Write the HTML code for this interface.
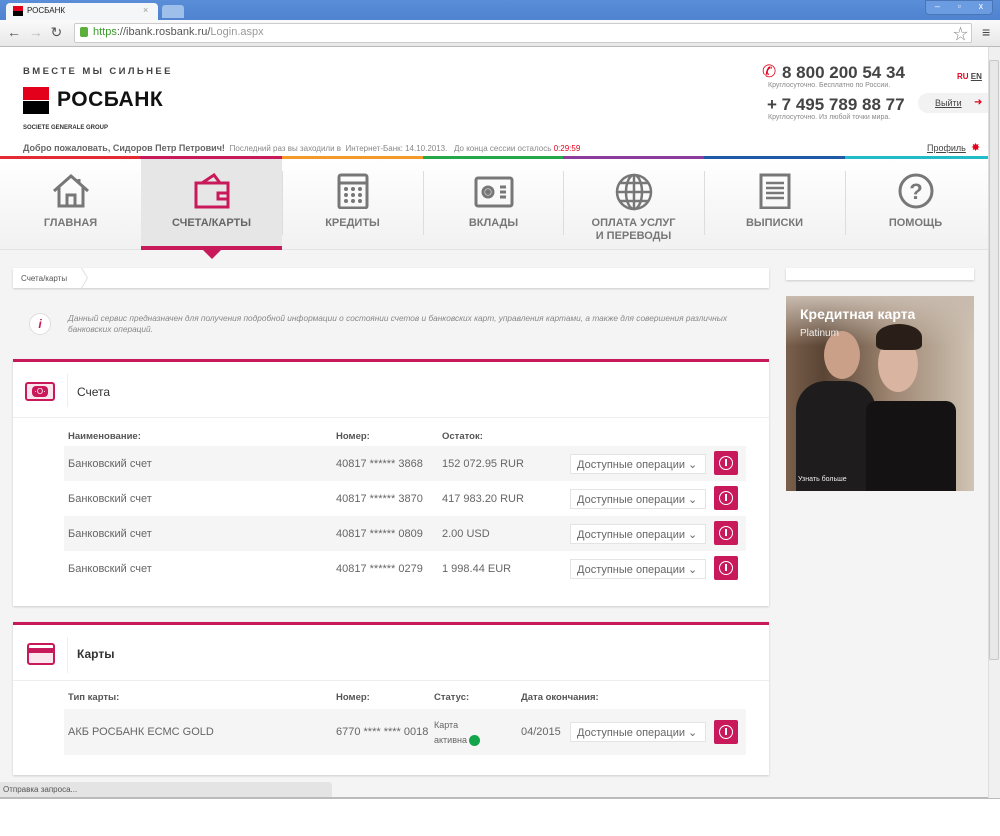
<!DOCTYPE html>
<html><head><meta charset="utf-8"><style>
*{margin:0;padding:0;box-sizing:border-box}
body{width:1000px;height:836px;background:#fff;font-family:"Liberation Sans","Noto Sans CJK SC",sans-serif;position:relative;overflow:hidden;color:#555}
.a{position:absolute}
.tabbar{left:0;top:0;width:1000px;height:21px;background:linear-gradient(#5a8ed8,#4f82cf)}
.toolbar{left:0;top:20px;width:1000px;height:27px;background:linear-gradient(#fafafa,#e8e8e8);border-bottom:1px solid #bbb}
.nav{left:0;top:159px;width:988px;height:91px;background:linear-gradient(#fff,#f1f1f1);border-bottom:1px solid #e2e2e2}
.ni{position:absolute;top:0;width:141px;height:91px;text-align:center;font-size:11px;font-weight:bold;color:#777}
.ni svg{position:absolute;left:50%;margin-left:-20px;top:14px}
.ni span{position:absolute;left:0;right:0;top:58px;line-height:13px}
.sep{position:absolute;top:12px;width:1px;height:64px;background:#ddd}
.content{left:0;top:250px;width:988px;height:548px;background:#f4f4f4}
.panel{background:#fff;border-top:3px solid #c8195a;box-shadow:0 1px 2px #ccc}
.row{position:absolute;left:51px;width:682px;height:35px;font-size:11px;color:#666}
.row div{position:absolute;top:12px}
.sel{position:absolute;width:136px;height:20px;top:8px!important;left:506px;background:#fff;border:1px solid #e4e4e4;font-size:11px;color:#666;padding:3px 0 0 6px}
.btn{position:absolute;left:650px;top:5px!important;width:24px;height:24px;background:#c8195a;border-radius:2px}
.hd{position:absolute;font-size:9.5px;font-weight:bold;color:#555}
.btn::after{content:"";position:absolute;left:5px;top:5px;width:12px;height:12px;border:1.5px solid #fff;border-radius:50%}
.btn::before{content:"";position:absolute;left:11px;top:8px;width:2px;height:7px;background:#fff}
</style></head><body>
<div class="a tabbar"></div>
<div class="a" style="left:6px;top:3px;width:152px;height:18px;background:#f4f6f8;border-radius:4px 4px 0 0"></div>
<div class="a" style="left:13px;top:6px;width:10px;height:10px;background:linear-gradient(#e3001b 50%,#000 50%)"></div>
<div class="a" style="left:27px;top:6px;font-size:8px;color:#222">РОСБАНК</div>
<div class="a" style="left:143px;top:5px;font-size:9px;color:#999">×</div>
<div class="a" style="left:162px;top:5px;width:22px;height:13px;background:#9dbfe9;border-radius:3px 3px 0 0"></div>
<div class="a" style="left:925px;top:0;width:68px;height:15px;background:#6b9be0;border-radius:0 0 4px 4px;border:1px solid #4a76b8;font-size:9px;color:#fff;display:flex;justify-content:space-around">–<span>▫</span><span>x</span></div>
<div class="a toolbar"></div>
<div class="a" style="left:7px;top:24px;font-size:14px;color:#555">←&nbsp;&nbsp;<span style="color:#bbb">→</span>&nbsp;&nbsp;↻</div>
<div class="a" style="left:74px;top:23px;width:898px;height:20px;background:#fff;border:1px solid #ccc;border-radius:2px"></div>
<div class="a" style="left:80px;top:27px;width:8px;height:10px;background:#5cae3d;border-radius:2px"></div>
<div class="a" style="left:93px;top:26px;font-size:11px;color:#555"><span style="color:#3a9b2b">https</span>://ibank.rosbank.ru/<span style="color:#999">Login.aspx</span></div>
<div class="a" style="left:953px;top:23px;font-size:15px;color:#888">☆</div>
<div class="a" style="left:982px;top:24px;font-size:14px;color:#444">≡</div>

<div class="a" style="left:23px;top:66px;font-size:9.5px;letter-spacing:2.4px;color:#444;font-weight:bold">ВМЕСТЕ МЫ СИЛЬНЕЕ</div>
<div class="a" style="left:23px;top:87px;width:26px;height:27px;background:linear-gradient(#e3001b 48%,#fff 48%,#fff 52%,#000 52%)"></div>
<div class="a" style="left:57px;top:88px;font-size:21px;color:#111;font-weight:bold;letter-spacing:0.5px">РОСБАНК</div>
<div class="a" style="left:23px;top:125px;font-size:6px;color:#333;font-weight:bold">SOCIETE GENERALE GROUP</div>
<div class="a" style="left:23px;top:143px;font-size:9px;color:#666;white-space:nowrap"><b>Добро пожаловать, Сидоров Петр Петрович!</b> <span style="font-size:8px;color:#888">&nbsp;Последний раз вы заходили в&nbsp; Интернет-Банк: 14.10.2013.&nbsp;&nbsp; До конца сессии осталось <span style="color:#e3001b">0:29:59</span></span></div>
<div class="a" style="left:762px;top:62px;font-size:17px;color:#e3001b">✆</div>
<div class="a" style="left:782px;top:63px;font-size:17px;font-weight:bold;color:#444">8 800 200 54 34</div>
<div class="a" style="left:768px;top:82px;font-size:7px;color:#888">Круглосуточно. Бесплатно по России.</div>
<div class="a" style="left:767px;top:95px;font-size:17px;font-weight:bold;color:#444">+ 7 495 789 88 77</div>
<div class="a" style="left:768px;top:114px;font-size:7px;color:#888">Круглосуточно. Из любой точки мира.</div>
<div class="a" style="left:957px;top:72px;font-size:8px;font-weight:bold"><span style="color:#e3001b">RU</span> <span style="color:#444;text-decoration:underline">EN</span></div>
<div class="a" style="left:918px;top:93px;width:70px;height:20px;background:#f2f2f2;border-radius:10px 0 0 10px"></div>
<div class="a" style="left:935px;top:98px;font-size:9px;color:#444;text-decoration:underline">Выйти</div>
<div class="a" style="left:974px;top:97px;font-size:10px;color:#e3001b">➜</div>
<div class="a" style="left:927px;top:143px;font-size:9px;color:#444;text-decoration:underline">Профиль</div>
<div class="a" style="left:971px;top:141px;font-size:11px;color:#e3001b">✸</div>
<div class="a" style="left:0;top:156px;width:988px;height:3px;background:linear-gradient(90deg,#e42a32 0 140px,#c8195a 140px 282px,#f39a2b 282px 423px,#25a84a 423px 563px,#8e3b9e 563px 704px,#1f5aa6 704px 845px,#22bcc9 845px)"></div>

<div class="a content"></div>
<div class="a nav">
<div class="ni" style="left:0"><svg width="40" height="36" viewBox="0 0 40 36" fill="none" stroke="#777" stroke-width="3"><path d="M3 18 L20 3 L37 18 M8 14 V33 H32 V14 M16 33 V22 H24 V33 M28 6 V10"/></svg><span>ГЛАВНАЯ</span></div>
<div class="ni" style="left:141px;background:#e6e6e6;height:87px"><svg width="40" height="36" viewBox="0 0 40 36" fill="none" stroke="#c8195a" stroke-width="3"><path d="M4 10 H36 V34 H4 Z M10 10 L22 2 L28 10 M26 20 H36 V26 H26 Z"/></svg><span style="color:#666">СЧЕТА/КАРТЫ</span></div>
<div class="a" style="left:141px;top:87px;width:141px;height:4px;background:#c8195a"></div>
<div class="a" style="left:203px;top:91px;width:0;height:0;border-left:9px solid transparent;border-right:9px solid transparent;border-top:9px solid #c8195a;z-index:5"></div>
<div class="ni" style="left:282px"><svg width="40" height="36" viewBox="0 0 40 36" fill="none" stroke="#777" stroke-width="3"><rect x="6" y="2" width="28" height="33" rx="2"/><path d="M6 10 H34" /><g fill="#777" stroke="none"><circle cx="13" cy="16" r="2"/><circle cx="20" cy="16" r="2"/><circle cx="27" cy="16" r="2"/><circle cx="13" cy="22" r="2"/><circle cx="20" cy="22" r="2"/><circle cx="27" cy="22" r="2"/><circle cx="13" cy="28" r="2"/><circle cx="20" cy="28" r="2"/><circle cx="27" cy="28" r="2"/></g></svg><span>КРЕДИТЫ</span></div>
<div class="ni" style="left:423px"><svg width="40" height="36" viewBox="0 0 40 36" fill="none" stroke="#777" stroke-width="3"><rect x="2" y="5" width="36" height="28" rx="2"/><circle cx="14" cy="19" r="5"/><circle cx="14" cy="19" r="1.5"/><path d="M26 14 H32 M26 19 H32 M26 24 H32"/></svg><span>ВКЛАДЫ</span></div>
<div class="ni" style="left:563px"><svg width="40" height="38" viewBox="0 0 40 38" fill="none" stroke="#777" stroke-width="2.5"><circle cx="20" cy="19" r="17"/><ellipse cx="20" cy="19" rx="8" ry="17"/><path d="M20 2 V36 M3 19 H37 M6 10 H34 M6 28 H34"/></svg><span>ОПЛАТА УСЛУГ<br>И ПЕРЕВОДЫ</span></div>
<div class="ni" style="left:704px"><svg width="40" height="36" viewBox="0 0 40 36" fill="none" stroke="#777" stroke-width="3"><rect x="6" y="2" width="28" height="33"/><path d="M11 10 H29 M11 15 H29 M11 20 H29 M11 25 H29" stroke-width="2.5"/></svg><span>ВЫПИСКИ</span></div>
<div class="ni" style="left:845px"><svg width="40" height="36" viewBox="0 0 40 36" fill="none" stroke="#777" stroke-width="3"><circle cx="20" cy="18" r="16"/><text x="20" y="26" text-anchor="middle" font-size="22" font-weight="bold" fill="#777" stroke="none" font-family="Liberation Sans">?</text></svg><span>ПОМОЩЬ</span></div>
<div class="sep" style="left:282px"></div><div class="sep" style="left:423px"></div><div class="sep" style="left:563px"></div><div class="sep" style="left:704px"></div><div class="sep" style="left:845px"></div>
</div>

<div class="a" style="left:13px;top:268px;width:756px;height:20px;background:#fff;box-shadow:0 1px 2px #ccc"></div>
<div class="a" style="left:21px;top:274px;font-size:8px;color:#555">Счета/карты</div>
<div class="a" style="left:79px;top:268px;width:6px;height:10px;border-right:1px solid #ddd;transform:skewX(30deg)"></div>
<div class="a" style="left:79px;top:278px;width:6px;height:10px;border-right:1px solid #ddd;transform:skewX(-30deg)"></div>
<div class="a" style="left:786px;top:268px;width:188px;height:12px;background:#fff;box-shadow:0 1px 2px #ccc"></div>
<div class="a" style="left:786px;top:296px;width:188px;height:195px;background:linear-gradient(90deg,#7a604c,#5a4434 20%,#9c8470 55%,#b7a694 80%,#d0c4b4);overflow:hidden">
<div class="a" style="left:0;top:0;width:188px;height:50px;background:linear-gradient(#c8bbae,rgba(200,187,174,0))"></div>
<div class="a" style="left:10px;top:85px;width:80px;height:110px;background:#1e1c1c;border-radius:30px 30px 0 0"></div>
<div class="a" style="left:38px;top:35px;width:36px;height:48px;background:#caa088;border-radius:50%"></div>
<div class="a" style="left:80px;top:105px;width:90px;height:90px;background:#141212;border-radius:10px 10px 0 0"></div>
<div class="a" style="left:92px;top:40px;width:40px;height:56px;background:#d9b4a0;border-radius:50%"></div>
<div class="a" style="left:90px;top:28px;width:46px;height:26px;background:#2a1e18;border-radius:50% 50% 20% 20%"></div>
<div class="a" style="left:14px;top:10px;font-size:14px;color:#fff;font-weight:bold">Кредитная карта</div>
<div class="a" style="left:14px;top:32px;font-size:10px;color:#eee">Platinum</div>
<div class="a" style="left:12px;top:180px;font-size:7px;color:#eee">Узнать больше</div>
</div>

<div class="a" style="left:29px;top:313px;width:22px;height:22px;border-radius:50%;background:#fff;border:1px solid #ddd;color:#c8195a;font-size:12px;font-weight:bold;font-style:italic;text-align:center;line-height:20px">i</div>
<div class="a" style="left:68px;top:313px;font-size:8.3px;font-style:italic;color:#888;line-height:11px;width:670px">Данный сервис предназначен для получения подробной информации о состоянии счетов и банковских карт, управления картами, а также для совершения различных банковских операций.</div>

<div class="a panel" style="left:13px;top:359px;width:756px;height:247px">
<div class="a" style="left:0;top:55px;width:756px;height:1px;background:#eee"></div>
<div class="a" style="left:54px;top:12px;width:1px;height:33px;background:#eee"></div>
<div class="a" style="left:12px;top:20px;width:30px;height:19px;border:2px solid #c8195a;border-radius:3px;background:#fbe6ee"><div style="margin:2px 5px;height:11px;background:#c8195a;border-radius:4px;color:#fff;font-size:8px;text-align:center;line-height:11px">·O·</div></div>
<div class="a" style="left:64px;top:23px;font-size:12px;color:#333">Счета</div>
<div class="hd" style="left:55px;top:69px">Наименование:</div>
<div class="hd" style="left:323px;top:69px">Номер:</div>
<div class="hd" style="left:429px;top:69px">Остаток:</div>
<div class="row" style="top:84px;background:#f5f5f5"><div style="left:4px">Банковский счет</div><div style="left:272px">40817 ****** 3868</div><div style="left:378px">152 072.95 RUR</div><div class="sel">Доступные операции ⌄</div><div class="btn"></div></div>
<div class="row" style="top:119px"><div style="left:4px">Банковский счет</div><div style="left:272px">40817 ****** 3870</div><div style="left:378px">417 983.20 RUR</div><div class="sel">Доступные операции ⌄</div><div class="btn"></div></div>
<div class="row" style="top:154px;background:#f5f5f5"><div style="left:4px">Банковский счет</div><div style="left:272px">40817 ****** 0809</div><div style="left:378px">2.00 USD</div><div class="sel">Доступные операции ⌄</div><div class="btn"></div></div>
<div class="row" style="top:189px"><div style="left:4px">Банковский счет</div><div style="left:272px">40817 ****** 0279</div><div style="left:378px">1 998.44 EUR</div><div class="sel">Доступные операции ⌄</div><div class="btn"></div></div>
</div>

<div class="a panel" style="left:13px;top:622px;width:756px;height:153px">
<div class="a" style="left:0;top:55px;width:756px;height:1px;background:#eee"></div>
<div class="a" style="left:54px;top:12px;width:1px;height:36px;background:#eee"></div>
<div class="a" style="left:14px;top:18px;width:28px;height:22px;border:2px solid #c8195a;border-radius:3px;background:linear-gradient(#fff 3px,#c8195a 3px,#c8195a 8px,#fbe6ee 8px)"></div>
<div class="a" style="left:64px;top:22px;font-size:12px;color:#333;font-weight:bold">Карты</div>
<div class="hd" style="left:55px;top:67px">Тип карты:</div>
<div class="hd" style="left:323px;top:67px">Номер:</div>
<div class="hd" style="left:421px;top:67px">Статус:</div>
<div class="hd" style="left:508px;top:67px">Дата окончания:</div>
<div class="row" style="top:84px;height:46px;background:#f5f5f5"><div style="left:4px;top:17px">АКБ РОСБАНК ЕСМС GOLD</div><div style="left:272px;top:17px">6770 **** **** 0018</div><div style="left:370px;top:9px;font-size:9px;line-height:15px">Карта<br>активна <span style="display:inline-block;width:11px;height:11px;border-radius:50%;background:#13a54a;vertical-align:middle"></span></div><div style="left:457px;top:17px">04/2015</div><div class="sel" style="top:13px!important">Доступные операции ⌄</div><div class="btn" style="top:11px!important"></div></div>
</div>

<div class="a" style="left:0;top:782px;width:332px;height:16px;background:#e4e4e4;border-radius:0 3px 0 0;font-size:8px;color:#555;padding:3px 0 0 3px">Отправка запроса...</div>
<div class="a" style="left:0;top:797px;width:1000px;height:2px;background:#bbb"></div>
<div class="a" style="left:988px;top:47px;width:12px;height:751px;background:#f0f0f0;border-left:1px solid #ddd"></div>
<div class="a" style="left:989px;top:60px;width:10px;height:600px;background:#e8e8e8;border:1px solid #c8c8c8;border-radius:2px"></div>
</body></html>
